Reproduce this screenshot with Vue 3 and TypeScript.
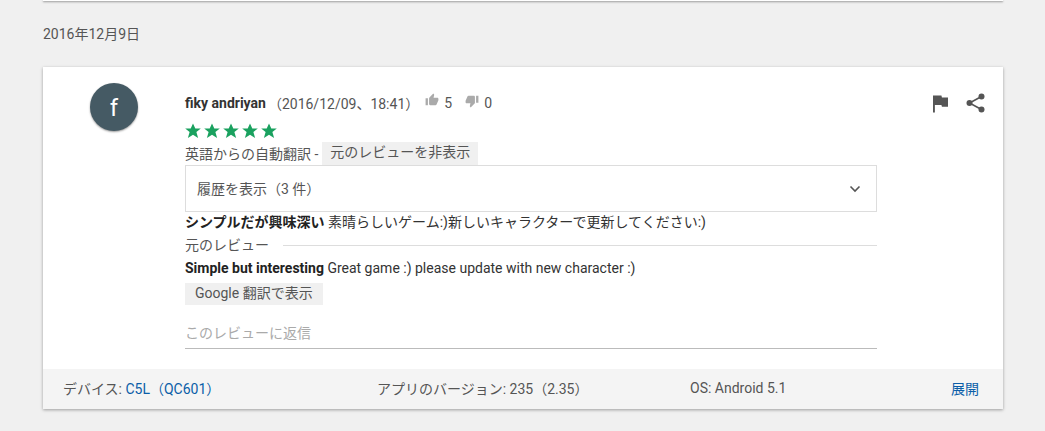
<script setup lang="ts">
const stars = [1, 2, 3, 4, 5];
const starPath = 'M8 .4l2.300 5.200h5.500l-4.400 3.500 1.700 5.900L8 11.700 2.900 15l1.700-5.900L.2 5.600h5.500z';
</script>

<template>
  <div class="page">
    <div class="prev-card"></div>
    <div class="date">2016年12月9日</div>
    <div class="card">
      <div class="card-body">
        <div class="avatar-col">
          <div class="avatar">f</div>
        </div>
        <div class="content">
          <div class="meta">
            <span class="author">fiky andriyan</span>
            <span class="time">（2016/12/09、18:41）</span>
            <svg class="thumb" viewBox="0 0 24 24"><path d="M1 21h4V9H1v12zM23 10c0-1.100-.9-2-2-2h-6.300l1-4.600v-.3c0-.4-.2-.8-.4-1.100L14.200 1 7.600 7.600C7.200 8 7 8.500 7 9v10c0 1.100.9 2 2 2h9c.8 0 1.500-.5 1.800-1.200l3-7.100c.1-.2.200-.5.200-.7v-2z"/></svg>
            <span class="num">5</span>
            <svg class="thumb down" viewBox="0 0 24 24"><path d="M15 3H6c-.8 0-1.500.5-1.800 1.200l-3 7.100c-.1.200-.2.500-.2.700v2c0 1.100.9 2 2 2h6.300l-1 4.600v.3c0 .4.200.8.400 1.100L9.800 23l6.600-6.600c.4-.4.6-.9.600-1.400V5c0-1.100-.9-2-2-2zm4 0v12h4V3h-4z"/></svg>
            <span class="num">0</span>
          </div>
          <div class="stars">
            <svg v-for="s in stars" :key="s" class="star" viewBox="0 0 16 16"><path :d="starPath"/></svg>
          </div>
          <div class="translated">
            <span>英語からの自動翻訳 -</span>
            <span class="chip">元のレビューを非表示</span>
          </div>
          <div class="history">
            <span class="history-label">履歴を表示（3 件）</span>
            <svg class="chevron" viewBox="0 0 12 8"><path d="M1.500 1.500L6 6l4.500-4.500" /></svg>
          </div>
          <div class="review"><b>シンプルだが興味深い</b> 素晴らしいゲーム:)新しいキャラクターで更新してください:)</div>
          <div class="original-head">
            <span>元のレビュー</span>
            <span class="rule"></span>
          </div>
          <div class="review-en"><b>Simple but interesting</b> Great game :) please update with new character :)</div>
          <div class="chip translate">Google 翻訳で表示</div>
          <div class="reply">このレビューに返信</div>
        </div>
        <div class="actions">
          <svg class="flag" viewBox="0 0 16 18"><path d="M0 0h9l.5 2H16v10H9.500L9 10H2v8H0z"/></svg>
          <svg class="share" viewBox="0 0 19 20">
            <circle cx="15.500" cy="3.500" r="3"/>
            <circle cx="3.500" cy="10" r="3"/>
            <circle cx="15.500" cy="16.500" r="3"/>
            <path d="M15.500 3.500L3.500 10l12 6.500" fill="none" stroke="#555" stroke-width="1.600"/>
          </svg>
        </div>
      </div>
      <div class="footer">
        <span class="f-device">デバイス: <a>C5L（QC601）</a></span>
        <span class="f-version">アプリのバージョン: 235（2.35）</span>
        <span class="f-os">OS: Android 5.1</span>
        <a class="f-more">展開</a>
      </div>
    </div>
  </div>
</template>

<style>
html, body { background: #f0f0f0; }
</style>

<style scoped>
.page {
  width: 1045px; height: 431px; overflow: hidden; background: #f0f0f0;
  font-family: Roboto, "Noto Sans CJK JP", sans-serif; font-size: 14px; color: #555;
  padding: 0 42px 0 43px; box-sizing: border-box;
}
.prev-card { height: 1px; background: #fff; box-shadow: 0 1px 2px rgba(0,0,0,.5); }
.date { margin-top: 25px; height: 16px; line-height: 16px; }
.card { margin-top: 25px; width: 960px; height: 342px; background: #fff; box-shadow: 0 1px 3px rgba(0,0,0,.35); display: flex; flex-direction: column; }
.card-body { flex: 1; display: flex; }
.avatar-col { width: 142px; padding: 16px 0 0 47px; box-sizing: border-box; }
.avatar {
  width: 48px; height: 48px; border-radius: 50%; background: #455a64; color: #fff;
  font-size: 24px; line-height: 50px; text-align: center; box-shadow: 0 1px 2px rgba(0,0,0,.4);
}
.content { width: 692px; padding-top: 26px; }
.meta { display: flex; align-items: center; height: 20px; }
.author { font-weight: 700; color: #333; }
.time { margin-left: 2px; }
.thumb { width: 14px; height: 14px; fill: #aaa; margin: -7px 4px 0 6px; }
.thumb.down { margin-left: 13px; margin-top: -5px; }
.num { margin-left: 1px; }
.stars { display: flex; margin-top: 10px; height: 16px; gap: 3px; }
.star { width: 16px; height: 16px; fill: #1aa15f; }
.translated { display: flex; align-items: center; height: 23px; margin-top: 3px; gap: 4px; }
.translated > span:first-child { padding-bottom: 2px; }
.chip { background: #f0f0f0; padding: 0 8px; line-height: 21px; color: #555; }
.translated .chip { padding-bottom: 2px; }
.history {
  height: 47px; border: 1px solid #ddd; box-sizing: border-box; display: flex; align-items: center;
  justify-content: space-between; padding: 0 15px 0 11px;
}
.history-label { padding-bottom: 2px; }
.chevron { width: 12px; height: 8px; fill: none; stroke: #555; stroke-width: 1.600; }
.review { margin-top: 1px; line-height: 18px; height: 18px; color: #333; }
.review b, .review-en b { color: #222; }
.original-head { display: flex; align-items: center; height: 24px; margin-top: 1px; }
.rule { flex: 1; height: 1px; background: #ddd; margin: 3px 0 0 14px; }
.review-en { margin-top: 2px; line-height: 20px; height: 20px; color: #333; }
.translate { display: inline-block; margin-top: 5px; padding: 0 10px 1px; line-height: 21px; }
.reply { margin-top: 17px; height: 27px; line-height: 22px; border-bottom: 1px solid #bbb; box-sizing: border-box; color: #aaa; }
.actions { flex: 1; display: flex; gap: 18px; padding: 28px 0 0 56px; align-items: flex-start; }
.flag { width: 15px; height: 18px; fill: #555; }
.share { width: 19px; height: 20px; fill: #555; margin-top: -2px; }
.footer { height: 40px; background: #f4f4f4; display: grid; grid-template-columns: 314px 313px 261px 1fr; align-items: center; padding: 0 0 2px 20px; box-sizing: border-box; }
.footer a { color: #0b5ea8; }
</style>
